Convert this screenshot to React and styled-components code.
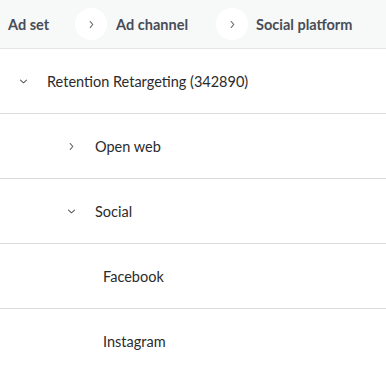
import React from "react";
import styled, { createGlobalStyle } from "styled-components";

const Global = createGlobalStyle`
  html, body { margin: 0; padding: 0; background: #fff; }
  body { font-family: Lato, "Noto Sans", sans-serif; }
`;

const Page = styled.div`
  width: 386px;
  height: 371px;
  overflow: hidden;
  background: #fff;
`;

const Header = styled.div`
  height: 48px;
  display: flex;
  align-items: center;
  padding-left: 8px;
  background: #f7f8f8;
  border-bottom: 1px solid #e4e6e8;
`;

const Crumb = styled.span`
  font-size: 14.5px;
  font-weight: 700;
  color: #474d57;
`;

const Sep = styled.span`
  width: 32px;
  height: 32px;
  border-radius: 50%;
  background: #fff;
  display: flex;
  align-items: center;
  justify-content: center;
  margin: 0 ${(p) => p.$right}px 0 ${(p) => p.$left}px;
  color: #5b616b;
`;

const Row = styled.div`
  height: 64px;
  display: flex;
  align-items: center;
  padding-left: ${(p) => p.$indent}px;
  border-bottom: 1px solid #dcdcdc;
`;

const Toggle = styled.span`
  width: 28px;
  display: flex;
  align-items: center;
  color: #5a5a5a;
`;

const Label = styled.span`
  font-size: 14.5px;
  color: #2b2b2b;
`;

const Chev = ({ dir }) => (
  <svg width="9" height="9" viewBox="0 0 9 9" fill="none" stroke="currentColor" strokeWidth="1.1" strokeLinecap="round" strokeLinejoin="round">
    {dir === "down" ? <path d="M1.5 3.2 L4.5 5.8 L7.5 3.2" /> : <path d="M3.2 1.5 L5.8 4.5 L3.2 7.5" />}
  </svg>
);

const rows = [
  { label: "Retention Retargeting (342890)", indent: 19, dir: "down" },
  { label: "Open web", indent: 67, dir: "right" },
  { label: "Social", indent: 67, dir: "down" },
  { label: "Facebook", indent: 103 },
  { label: "Instagram", indent: 103 },
];

export default function App() {
  return (
    <Page>
      <Global />
      <Header>
        <Crumb>Ad set</Crumb>
        <Sep $left={26} $right={9}><Chev dir="right" /></Sep>
        <Crumb>Ad channel</Crumb>
        <Sep $left={28} $right={8}><Chev dir="right" /></Sep>
        <Crumb>Social platform</Crumb>
      </Header>
      {rows.map((r) => (
        <Row key={r.label} $indent={r.indent}>
          {r.dir && <Toggle><Chev dir={r.dir} /></Toggle>}
          <Label>{r.label}</Label>
        </Row>
      ))}
    </Page>
  );
}
